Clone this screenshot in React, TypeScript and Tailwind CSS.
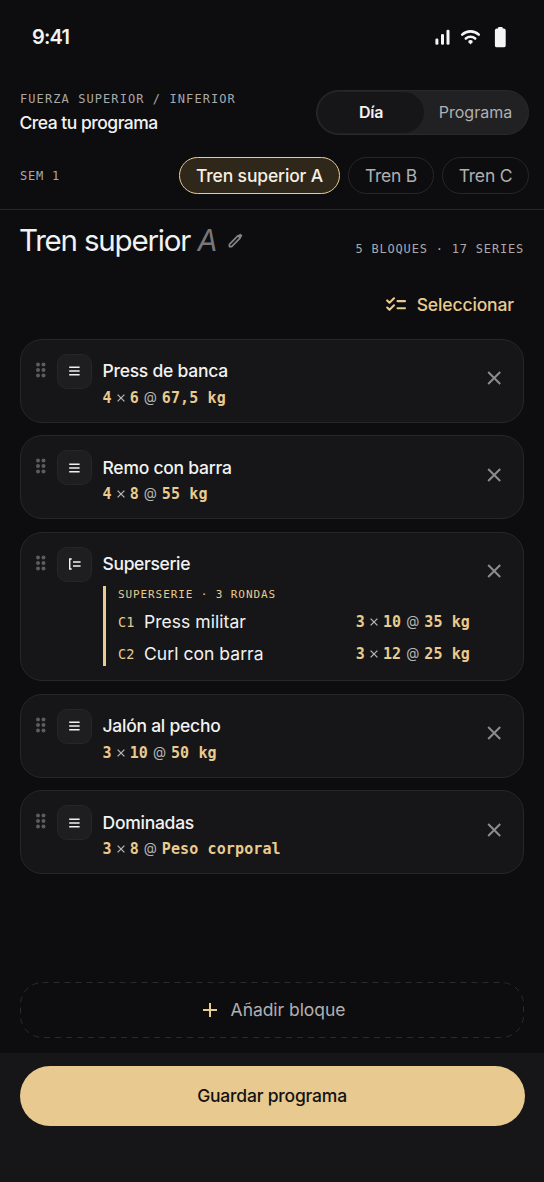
interface SetInfo {
    sets: string;
    reps: string;
    load: string;
}

interface Block extends SetInfo {
    name: string;
}

const MONO = "font-['DejaVu_Sans_Mono','Liberation_Mono',monospace]";

const topBlocks: Block[] = [
    { name: 'Press de banca', sets: '4', reps: '6', load: '67,5 kg' },
    { name: 'Remo con barra', sets: '4', reps: '8', load: '55 kg' },
];

const bottomBlocks: Block[] = [
    { name: 'Jalón al pecho', sets: '3', reps: '10', load: '50 kg' },
    { name: 'Dominadas', sets: '3', reps: '8', load: 'Peso corporal' },
];

const supersetItems = [
    { code: 'C1', name: 'Press militar', sets: '3', reps: '10', load: '35 kg' },
    { code: 'C2', name: 'Curl con barra', sets: '3', reps: '12', load: '25 kg' },
];

function SetLine({ sets, reps, load }: SetInfo) {
    return (
        <span className={`${MONO} flex items-center whitespace-pre text-[15px] leading-5 font-bold tracking-[0.12px] text-[#e9ca8f]`}>
            <span>{sets}</span>
            <svg className="mx-[5px] size-2" viewBox="0 0 8 8" stroke="#b5b5b5" strokeWidth="1.3">
                <path d="M.6.6l6.8 6.8M7.4.6L.6 7.4" />
            </svg>
            <span>{reps}</span>
            <span className="mx-[5px] -mt-[2px] w-[13px] text-center font-['Inter',sans-serif] text-[13.5px] font-normal tracking-normal text-[#b5b5b5]">@</span>
            <span>{load}</span>
        </span>
    );
}

function Grip() {
    return (
        <svg className="mt-[22px] ml-[14px] h-4 w-[11px]" viewBox="0 0 11 16" fill="#5c5c5e">
            {[2.4, 8, 13.5].map((y) => (
                <g key={y}>
                    <circle cx="3" cy={y} r="2" />
                    <circle cx="8.5" cy={y} r="2" />
                </g>
            ))}
        </svg>
    );
}

function Tile({ superset = false }: { superset?: boolean }) {
    return (
        <div className="mt-[14px] ml-[11px] flex size-[35px] items-center justify-center rounded-[10px] border border-[#262628] bg-[#1e1e20]">
            <svg className="h-3 w-3" viewBox="0 0 12 12" fill="none" stroke="#f0f0f0" strokeWidth="1.5">
                {superset ? (
                    <path d="M2.700 1H.7v10h2M4 4.100H11.600M4 7.900H11.600" />
                ) : (
                    <path d="M.2 2.200h10.400M.2 6h10.400M.2 9.800h10.400" />
                )}
            </svg>
        </div>
    );
}

function Close() {
    return (
        <svg className="mt-[31.5px] mr-[22px] size-[14px] shrink-0" viewBox="0 0 14 14" stroke="#8c8c8e" strokeWidth="2">
            <path d="M1.200 1l12 12M13.200 1l-12 12" />
        </svg>
    );
}

function BlockCard({ block }: { block: Block }) {
    return (
        <div className="flex h-[84px] items-start rounded-[22px] border border-[#27272a] bg-[#161618]">
            <Grip />
            <Tile />
            <div className="ml-[10.5px] flex-1 pt-[19.5px]">
                <h3 className="text-[17.5px] leading-6 font-medium tracking-[-0.25px] text-[#f2f2f2]">{block.name}</h3>
                <div className="mt-[4.5px]">
                    <SetLine sets={block.sets} reps={block.reps} load={block.load} />
                </div>
            </div>
            <Close />
        </div>
    );
}

function StatusIcons() {
    return (
        <svg className="h-[22px] w-[72px]" viewBox="435 25 72 22" fill="#f5f5f5">
            <rect x="435.4" y="37.5" width="3" height="6.2" rx="1.3" />
            <rect x="441" y="33" width="3" height="10.7" rx="1.3" />
            <rect x="446.5" y="28.8" width="3" height="14.9" rx="1.3" />
            <g fill="none" stroke="#f5f5f5" strokeWidth="2.6" strokeLinecap="round">
                <path d="M462.2 33.6a12.2 12.2 0 0 1 16.6 0" />
                <path d="M465.8 37.5a7 7 0 0 1 9.4 0" />
            </g>
            <path d="M470.5 43.4l-2-2.1q-.6-2.2 2-2.2t2 2.2z" />
            <path d="M498 27.6V27q0-.9.9-.9h2.9q.9 0 .9.9v.6h1.1q1.9 0 1.9 1.9v14.9q0 1.9-1.9 1.9h-7q-1.9 0-1.9-1.9V29.5q0-1.9 1.9-1.9z" />
        </svg>
    );
}

export default function App() {
    return (
        <div className="flex h-[1182px] w-[544px] flex-col overflow-hidden bg-[#0d0d0f] font-['Inter','Liberation_Sans',sans-serif] text-[#f2f2f2]">
            {/* Status bar */}
            <div className="flex h-[73px] shrink-0 items-center justify-between pr-[37px] pl-8">
                <span className="text-[20px] font-semibold tracking-[-0.8px]">9:41</span>
                <StatusIcons />
            </div>

            {/* Header */}
            <header className="h-[137px] shrink-0 border-b border-[#27272a] pr-[15px] pl-5">
                <div className="flex items-start justify-between pt-[17px]">
                    <div>
                        <p className={`${MONO} mt-px text-[12px] leading-4 tracking-[1.08px] text-[#a9a9ab]`}>FUERZA SUPERIOR / INFERIOR</p>
                        <h2 className="-ml-[0.5px] mt-1 text-[17.5px] leading-6 font-medium tracking-[-0.5px]">Crea tu programa</h2>
                    </div>
                    <div className="flex h-[45px] w-[213px] rounded-full border border-[#29292b] bg-[#212123] p-px">
                        <div className="flex w-[106px] items-center justify-center rounded-full bg-[#161618] pb-0.5 text-[16px] font-semibold tracking-[-0.3px]">Día</div>
                        <div className="flex flex-1 items-center justify-center pb-0.5 text-[16px] text-[#b0b0b2]">Programa</div>
                    </div>
                </div>
                <div className="mt-[22px] flex items-center gap-2">
                    <span className={`${MONO} flex-1 text-[12px] tracking-[0.8px] text-[#a9a9ab]`}>SEM 1</span>
                    <div className="flex h-[37px] w-[161px] items-center justify-center rounded-full border-[1.5px] border-[#e9ca8f] bg-[#30271b] pt-0.5 text-[17.5px] font-medium tracking-[-0.15px] text-[#f7f0e2]">Tren superior A</div>
                    <div className="flex h-[37px] w-[86px] items-center justify-center rounded-full border border-[#27272a] pt-0.5 text-[17.5px] tracking-[-0.25px] text-[#b0b0b2]">Tren B</div>
                    <div className="flex h-[37px] w-[87px] items-center justify-center rounded-full border border-[#27272a] pt-0.5 text-[17.5px] tracking-[-0.2px] text-[#b0b0b2]">Tren C</div>
                </div>
            </header>

            {/* Day title */}
            <main className="flex flex-1 flex-col px-5">
                <div className="flex h-[60px] items-start justify-between pt-3">
                    <div className="-ml-px flex items-center">
                        <h1 className="text-[29.5px] leading-9 tracking-[-1.2px]">
                            Tren superior <span className="text-[#77777a] italic">A</span>
                        </h1>
                        <svg className="ml-[12px] size-[15px]" viewBox="0 0 16 16" fill="none" stroke="#858587" strokeWidth="1.8" strokeLinejoin="round">
                            <path d="M1.500 14.500v-2.400L10.700 2.900l2.400 2.400-9.200 9.200z" />
                            <path d="M10.500 3l2-2q.6-.6 1.200 0l1.300 1.300q.6.6 0 1.200l-2 2z" fill="#858587" stroke="none" />
                        </svg>
                    </div>
                    <span className={`${MONO} mt-[19px] text-[12px] leading-4 tracking-[0.8px] text-[#a9a9ab]`}>5 BLOQUES · 17 SERIES</span>
                </div>

                <button className="mt-6 mr-[10px] flex h-[22px] items-center self-end text-[17.5px] font-medium tracking-[-0.12px] text-[#e9ca8f]">
                    <svg className="mr-[11px] h-4 w-5" viewBox="0 0 20 16" fill="none" stroke="#e9ca8f" strokeWidth="2.1" strokeLinecap="round" strokeLinejoin="round">
                        <path d="M1.200 3.400l2.300 2.300L8 1.300M1.200 10.500l2.300 2.300 4.500-4.500M11.500 4.100h7.500M11.500 11.200h7.500" />
                    </svg>
                    Seleccionar
                </button>

                {/* Blocks */}
                <div className="mt-[22.5px] flex flex-col gap-[12.6px]">
                    {topBlocks.map((block) => (
                        <BlockCard key={block.name} block={block} />
                    ))}

                    <div className="flex h-[149.5px] items-start rounded-[22px] border border-[#27272a] bg-[#161618]">
                        <Grip />
                        <Tile superset />
                        <div className="ml-[10.5px] flex-1 pt-[19.5px]">
                            <h3 className="text-[17.5px] leading-6 font-medium tracking-[-0.35px]">Superserie</h3>
                            <div className="mt-[9.5px] h-20 w-[367.5px] border-l-[3px] border-[#e9ca8f] pl-[12.5px]">
                                <p className={`${MONO} mb-[3px] text-[11px] leading-[17px] tracking-[0.9px] text-[#e9ca8f]`}>SUPERSERIE · 3 RONDAS</p>
                                {supersetItems.map((item) => (
                                    <div key={item.code} className="flex h-8 items-center">
                                        <span className={`${MONO} w-[26px] text-[13.5px] text-[#e9ca8f]`}>{item.code}</span>
                                        <span className="flex-1 text-[17.5px] tracking-[0.05px]">{item.name}</span>
                                        <SetLine sets={item.sets} reps={item.reps} load={item.load} />
                                    </div>
                                ))}
                            </div>
                        </div>
                        <Close />
                    </div>

                    {bottomBlocks.map((block) => (
                        <BlockCard key={block.name} block={block} />
                    ))}
                </div>

                <button className="relative mt-auto mb-[15px] flex h-[56px] items-center justify-center pl-1 text-[17.5px] tracking-[-0.05px] text-[#b0b0b2]">
                    <svg className="absolute inset-0 h-[56px] w-[504px]" viewBox="0 0 504 56" fill="none">
                        <rect x=".5" y=".5" width="503" height="55" rx="22" stroke="#2b2b2e" strokeDasharray="6 5" />
                    </svg>
                    <svg className="mr-[14px] size-[14px]" viewBox="0 0 14 14" stroke="#e9ca8f" strokeWidth="2">
                        <path d="M7 0v14M0 7h14" />
                    </svg>
                    Añadir bloque
                </button>
            </main>

            {/* Footer */}
            <footer className="h-[129px] shrink-0 bg-[#161618] px-[19.5px] pt-[13px]">
                <button className="flex h-[59.5px] w-full items-center justify-center rounded-full bg-[#e8c990] pt-px text-[17.5px] font-medium tracking-[-0.2px] text-[#121212]">
                    Guardar programa
                </button>
            </footer>
        </div>
    );
}
